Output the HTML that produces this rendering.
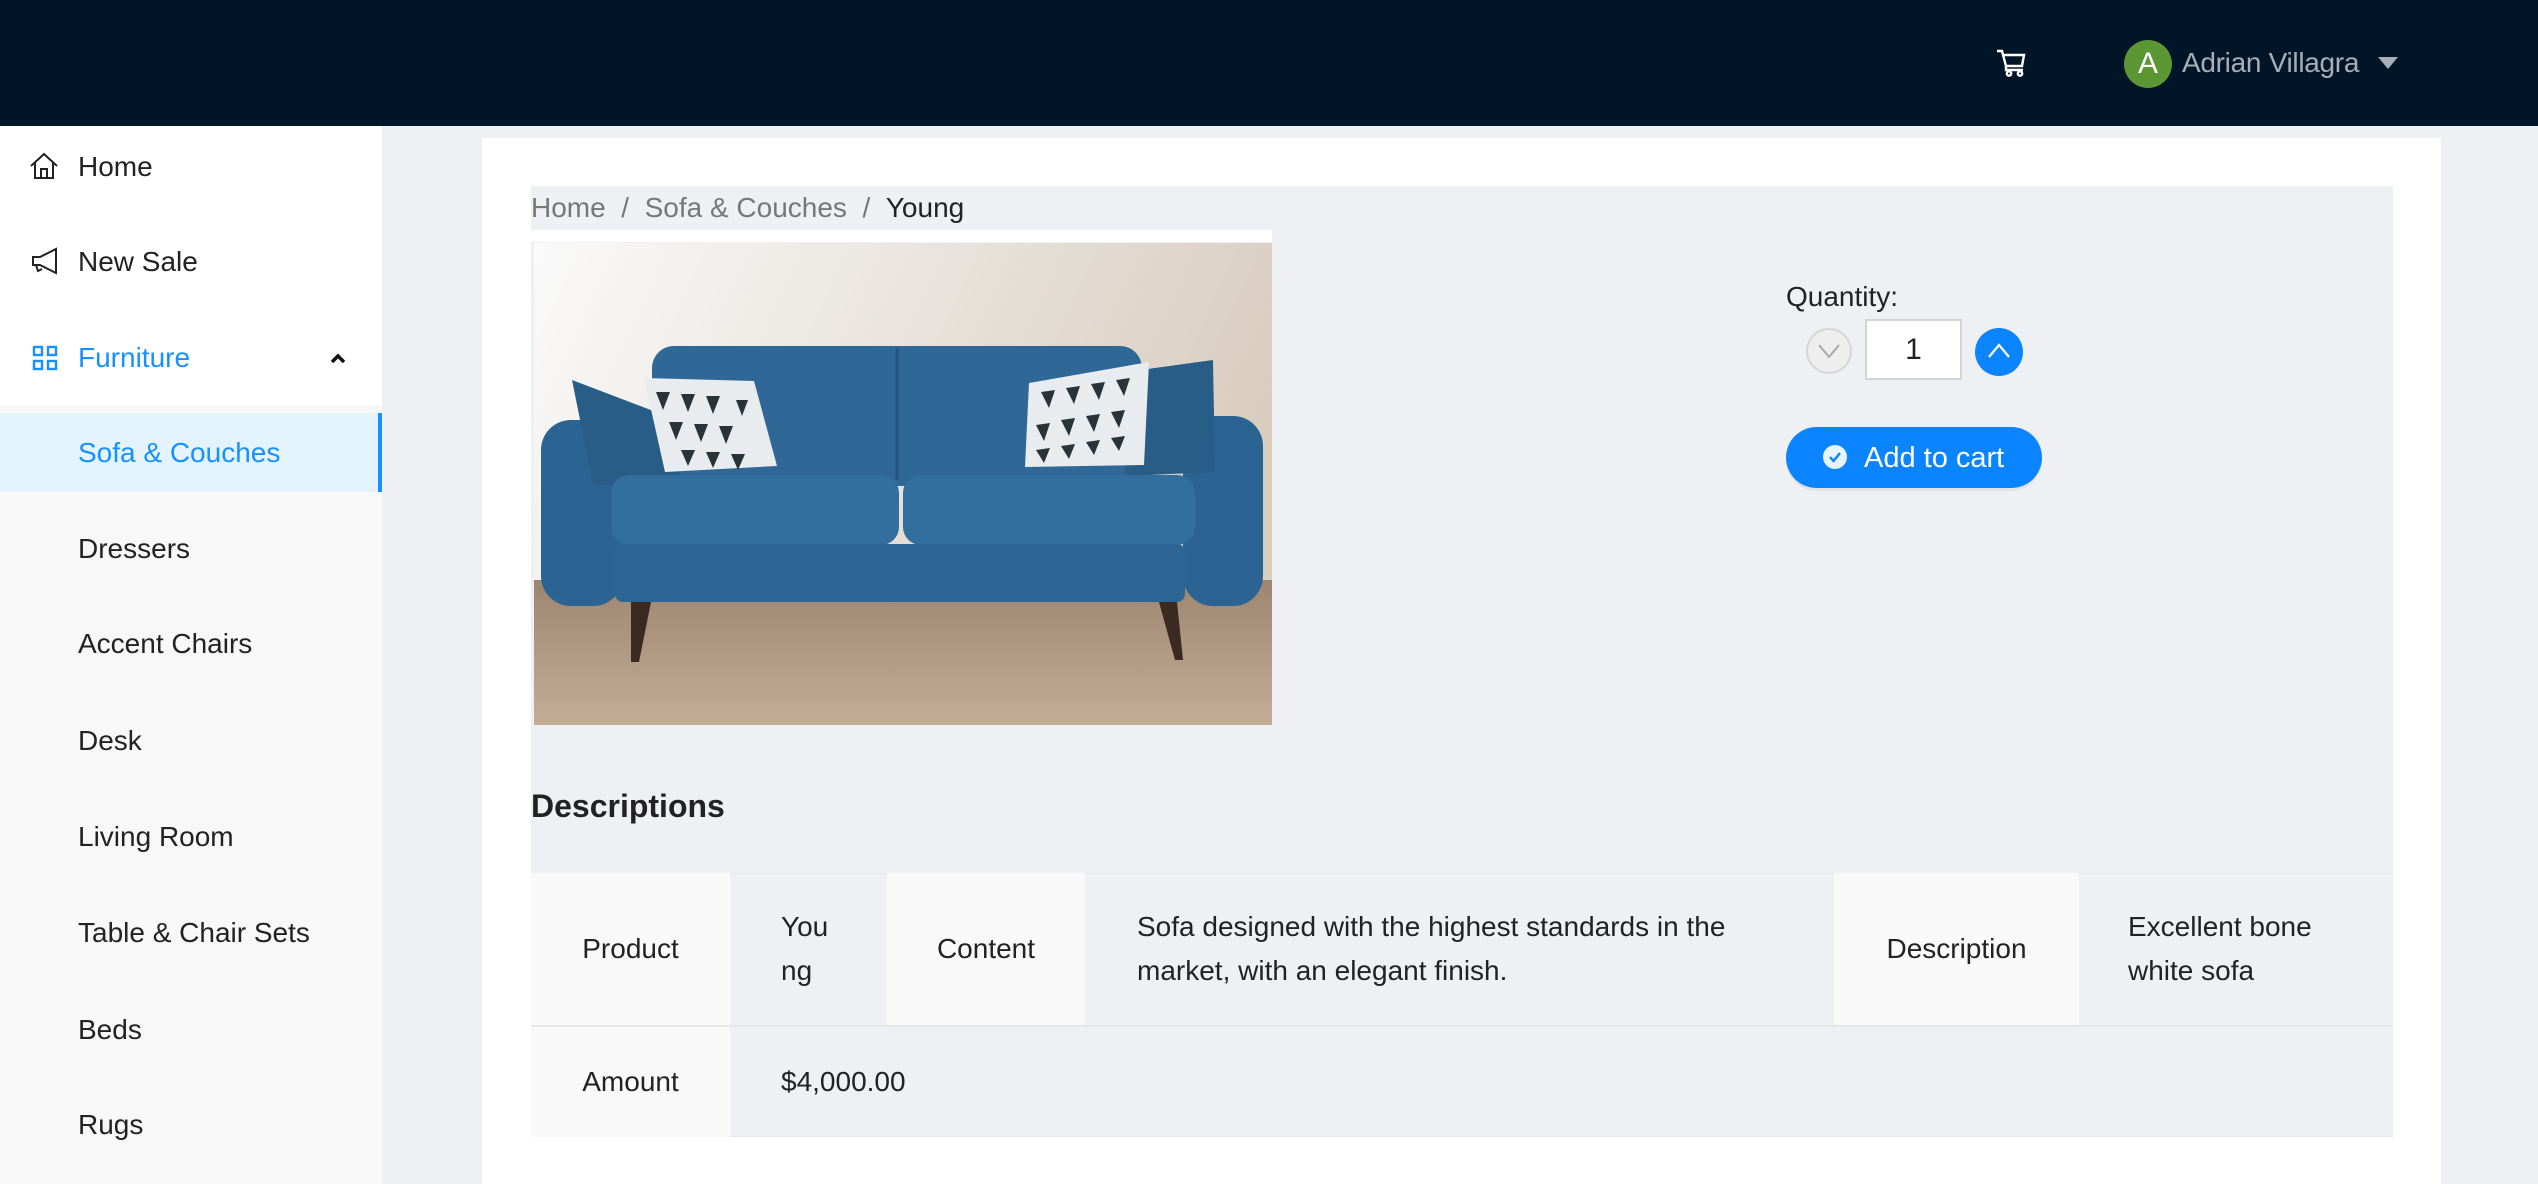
<!DOCTYPE html>
<html><head><meta charset="utf-8"><style>
*{margin:0;padding:0;box-sizing:border-box}
html{width:2538px;height:1184px;overflow:hidden}
body{width:2538px;height:1184px;overflow:hidden;background:#eff0f4;font-family:"Liberation Sans",sans-serif;position:relative;color:#222}
.hdr{position:absolute;left:0;top:0;width:2538px;height:126px;background:#001628}
.side{position:absolute;left:0;top:126px;width:382px;height:1058px;background:#f8f8f8}
.sidetop{position:absolute;left:0;top:126px;width:382px;height:279px;background:#fff}
.mi{position:absolute;left:78px;font-size:28px;line-height:32px;color:#222}
.card{position:absolute;left:482px;top:138px;width:1959px;height:1046px;background:#fff}
.inner{position:absolute;left:531px;top:186px;width:1862px;height:951px;background:#eff0f4}
.abs{position:absolute}
.td{position:absolute;font-size:28px;line-height:44px;color:#222;display:flex;align-items:center}
.lb{background:#f9f9f9;justify-content:center}
</style></head><body>
<div class="hdr"></div>
<svg class="abs" style="left:1996px;top:49px" width="30" height="28" viewBox="0 0 30 28" fill="none" stroke="#fff" stroke-width="2.4"><path d="M1 2h5l4 15h16l2-11H8"/><path d="M10 17v4h17"/><circle cx="13" cy="24.5" r="2.2"/><circle cx="24" cy="24.5" r="2.2"/></svg>
<div class="abs" style="left:2124px;top:40px;width:48px;height:48px;border-radius:50%;background:#5b9632;color:#fff;font-size:30px;line-height:48px;text-align:center">A</div>
<div class="abs" style="left:2182px;top:46px;font-size:28px;line-height:34px;color:#a8aeb6;letter-spacing:-0.3px">Adrian Villagra</div>
<div class="abs" style="left:2378px;top:57px;width:0;height:0;border-left:10px solid transparent;border-right:10px solid transparent;border-top:12px solid #a8aeb6"></div>

<div class="side"></div><div class="sidetop"></div>
<svg class="abs" style="left:29px;top:152px" width="30" height="28" viewBox="0 0 30 28" fill="none" stroke="#222" stroke-width="2"><path d="M2 14L15 2l13 12M6 11v15h18V11M12 26v-9h6v9"/></svg>
<div class="mi" style="top:151px">Home</div>
<svg class="abs" style="left:30px;top:247px" width="28" height="28" viewBox="0 0 28 28" fill="none" stroke="#222" stroke-width="2"><path d="M26 2v24L10 18H3V10h7zM6 18l2 6 4-2"/></svg>
<div class="mi" style="top:246px">New Sale</div>
<svg class="abs" style="left:32px;top:345px" width="26" height="26" viewBox="0 0 26 26" fill="none" stroke="#1890ff" stroke-width="2.4"><rect x="2" y="2" width="8" height="8"/><rect x="16" y="2" width="8" height="8"/><rect x="2" y="16" width="8" height="8"/><rect x="16" y="16" width="8" height="8"/></svg>
<div class="mi" style="top:342px;color:#1890ff">Furniture</div>
<svg class="abs" style="left:330px;top:352px" width="16" height="12" viewBox="0 0 16 12" fill="none" stroke="#111" stroke-width="3.5"><path d="M2 10l6-6 6 6"/></svg>
<div class="abs" style="left:0;top:413px;width:382px;height:79px;background:#e3f4ff;border-right:4px solid #1890ff"></div>
<div class="mi" style="top:437px;color:#1890ff">Sofa &amp; Couches</div>
<div class="mi" style="top:533px">Dressers</div>
<div class="mi" style="top:628px">Accent Chairs</div>
<div class="mi" style="top:725px">Desk</div>
<div class="mi" style="top:821px">Living Room</div>
<div class="mi" style="top:917px">Table &amp; Chair Sets</div>
<div class="mi" style="top:1014px">Beds</div>
<div class="mi" style="top:1109px">Rugs</div>

<div class="card"></div>
<div class="inner"></div>
<div class="abs" style="left:531px;top:192px;font-size:28px;line-height:32px;color:#777">Home&nbsp;&nbsp;/&nbsp;&nbsp;Sofa &amp; Couches&nbsp;&nbsp;/&nbsp;&nbsp;<span style="color:#222">Young</span></div>

<svg class="abs" style="left:531px;top:230px" width="741" height="495" viewBox="0 0 741 495">
<defs><linearGradient id="w" x1="0" y1="0" x2="1" y2="0.3"><stop offset="0" stop-color="#fafafa"/><stop offset="0.5" stop-color="#e9e4de"/><stop offset="1" stop-color="#d9cdbf"/></linearGradient>
<linearGradient id="f" x1="0" y1="0" x2="0" y2="1"><stop offset="0" stop-color="#9c8670"/><stop offset="1" stop-color="#c4ad96"/></linearGradient></defs>
<rect x="0" y="0" width="741" height="12" fill="#fff"/>
<rect x="3" y="13" width="738" height="482" fill="url(#w)"/>
<rect x="3" y="350" width="738" height="145" fill="url(#f)"/>
<path d="M100 372l20 0-12 60h-8z" fill="#3a2a22"/><path d="M628 372l18 0 6 58h-8z" fill="#3a2a22"/>
<rect x="121" y="116" width="490" height="140" rx="22" fill="#2f6896"/>
<line x1="366" y1="118" x2="366" y2="250" stroke="#23577f" stroke-width="3"/>
<rect x="10" y="190" width="82" height="186" rx="30" fill="#2b6392"/>
<rect x="652" y="186" width="80" height="190" rx="30" fill="#2b6392"/>
<path d="M41 150l105 40 4 72-88-8z" fill="#285d88"/>
<path d="M595 142l87-12 2 112-90 4z" fill="#285d88"/>
<path d="M113 148l110 3 23 85-112 6z" fill="#e8ecef"/>
<path d="M498 153l120-21-5 103-119 2z" fill="#e8ecef"/>
<g fill="#2a3338"><path d="M125 162l14 0-7 18zM150 164l14 0-7 18zM175 166l14 0-7 18zM138 192l14 0-7 18zM163 194l14 0-7 18zM188 196l14 0-7 18zM150 220l14 0-7 16zM175 222l14 0-7 16zM200 224l14 0-7 16zM205 170l12 0-6 16z"/>
<path d="M510 162l14 -2-6 18zM535 158l14 -2-6 18zM560 154l14 -2-6 18zM585 150l14 -2-6 18zM505 195l14 -2-6 18zM530 190l14 -2-6 18zM555 186l14 -2-6 18zM580 182l14 -2-6 18zM505 220l14 -2-6 15zM530 216l14 -2-6 15zM555 212l14 -2-6 15zM580 208l14 -2-6 15z"/></g>
<rect x="80" y="245" width="288" height="70" rx="18" fill="#326f9e"/>
<rect x="372" y="245" width="292" height="70" rx="18" fill="#326f9e"/>
<rect x="84" y="314" width="570" height="58" rx="8" fill="#2d6695"/>
</svg>

<div class="abs" style="left:1786px;top:281px;font-size:28px;line-height:32px">Quantity:</div>
<div class="abs" style="left:1806px;top:328px;width:46px;height:46px;border-radius:50%;background:#eee;border:2px solid #d6d6d6"></div>
<svg class="abs" style="left:1817px;top:343px" width="24" height="16" viewBox="0 0 24 16" fill="none" stroke="#aaa" stroke-width="2"><path d="M2 2l10 12 10-12"/></svg>
<div class="abs" style="left:1865px;top:319px;width:97px;height:61px;background:#fff;border:2px solid #d4d4d4;font-size:30px;line-height:57px;text-align:center">1</div>
<div class="abs" style="left:1975px;top:328px;width:48px;height:48px;border-radius:50%;background:#0a84ff"></div>
<svg class="abs" style="left:1987px;top:343px" width="24" height="16" viewBox="0 0 24 16" fill="none" stroke="#fff" stroke-width="2.2"><path d="M2 14L12 2l10 12"/></svg>
<div class="abs" style="left:1786px;top:427px;width:256px;height:61px;border-radius:31px;background:#0a84ff;box-shadow:0 3px 0 rgba(0,0,0,0.05)"></div>
<div class="abs" style="left:1823px;top:445px;width:24px;height:24px;border-radius:50%;background:#e6f4ff"></div>
<svg class="abs" style="left:1827px;top:449px" width="16" height="16" viewBox="0 0 16 16" fill="none" stroke="#0a84ff" stroke-width="2.4"><path d="M3 8l3.5 4L13 4"/></svg>
<div class="abs" style="left:1864px;top:441px;font-size:29px;line-height:34px;color:#fff">Add to cart</div>

<div class="abs" style="left:531px;top:788px;font-size:32px;line-height:36px;font-weight:bold">Descriptions</div>
<div class="abs" style="left:531px;top:873px;width:1862px;height:264px;border:1px solid #e6e6e6;border-right:none"></div>
<div class="td lb" style="left:531px;top:873px;width:199px;height:152px">Product</div>
<div class="td" style="left:781px;top:873px;width:100px;height:152px">You<br>ng</div>
<div class="td lb" style="left:887px;top:873px;width:198px;height:152px">Content</div>
<div class="td" style="left:1137px;top:873px;width:660px;height:152px">Sofa designed with the highest standards in the<br>market, with an elegant finish.</div>
<div class="td lb" style="left:1834px;top:873px;width:245px;height:152px">Description</div>
<div class="td" style="left:2128px;top:873px;width:260px;height:152px">Excellent bone<br>white sofa</div>
<div class="abs" style="left:531px;top:1025px;width:1862px;height:2px;background:#e6e6e6"></div>
<div class="td lb" style="left:531px;top:1027px;width:199px;height:110px">Amount</div>
<div class="td" style="left:781px;top:1027px;width:300px;height:110px">$4,000.00</div>
</body></html>
